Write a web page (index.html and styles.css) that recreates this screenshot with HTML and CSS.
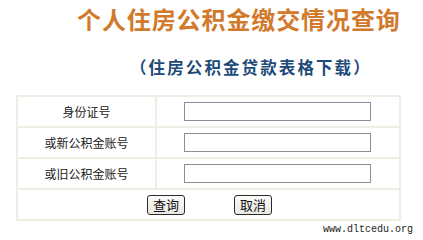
FILE: index.html
```html
<!DOCTYPE html>
<html>
<head>
<meta charset="utf-8">
<link rel="stylesheet" href="styles.css">
</head>
<body>
<div class="page">
  <h1 class="title">个人住房公积金缴交情况查询</h1>
  <h2 class="subtitle">（住房公积金贷款表格下载）</h2>
  <div class="form">
    <div class="row">
      <div class="label">身份证号</div>
      <div class="field"><span class="input"></span></div>
    </div>
    <div class="row">
      <div class="label">或新公积金账号</div>
      <div class="field"><span class="input"></span></div>
    </div>
    <div class="row">
      <div class="label">或旧公积金账号</div>
      <div class="field"><span class="input"></span></div>
    </div>
    <div class="row actions">
      <span class="btn">查询</span>
      <span class="btn">取消</span>
    </div>
  </div>
  <div class="footer">www.dltcedu.org</div>
</div>
</body>
</html>
```
FILE: styles.css
```css
html, body {
  margin: 0;
  padding: 0;
  background: #ffffff;
}
.page {
  width: 423px;
  height: 240px;
  overflow: hidden;
  font-family: "Noto Sans CJK SC", "Noto Sans", sans-serif;
}
.title {
  margin: 0;
  padding: 6px 0 0 77px;
  height: 30px;
  font-size: 24px;
  line-height: 26px;
  font-weight: bold;
  letter-spacing: 0.9px;
  color: #d27a2c;
  white-space: nowrap;
}
.subtitle {
  margin: 0;
  padding: 21px 0 0 130px;
  height: 20px;
  font-size: 16.5px;
  line-height: 20px;
  font-weight: bold;
  letter-spacing: 2.1px;
  color: #1d4a78;
  white-space: nowrap;
}
.form {
  margin: 18px 0 0 16px;
  width: 381px;
  border: 2px solid #efeee4;
  display: flex;
  flex-direction: column;
}
.row {
  display: flex;
  height: 29px;
  border-bottom: 2px solid #efeee4;
}
.row:last-child {
  border-bottom: none;
}
.label {
  width: 137px;
  border-right: 2px solid #efeee4;
  display: flex;
  align-items: center;
  justify-content: center;
  font-size: 12px;
  color: #222;
}
.field {
  flex: 1;
  display: flex;
  align-items: center;
  padding-left: 27px;
}
.input {
  display: block;
  width: 185px;
  height: 17px;
  border: 1px solid #8a9098;
  background: #fff;
}
.actions {
  justify-content: flex-start;
  align-items: center;
  padding-left: 129px;
  gap: 49px;
}
.btn {
  display: flex;
  align-items: center;
  justify-content: center;
  box-sizing: border-box;
  width: 38px;
  height: 20px;
  border: 1px solid #2b2b2b;
  border-radius: 3px;
  background: linear-gradient(#fbfbf8, #e8e7e0);
  font-size: 13px;
  color: #111;
}
.footer {
  margin: 3px 0 0 323px;
  font-family: "Liberation Mono", monospace;
  font-size: 10px;
  line-height: 12px;
  color: #222;
  white-space: nowrap;
}
```
